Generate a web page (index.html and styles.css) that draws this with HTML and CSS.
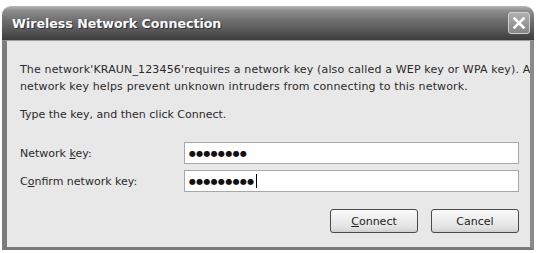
FILE: index.html
```html
<!DOCTYPE html>
<html>
<head>
<meta charset="utf-8">
<link rel="stylesheet" href="styles.css">
</head>
<body>
<div class="window">
  <div class="titlebar">
    <span class="title">Wireless Network Connection</span>
    <span class="close">
      <svg width="14" height="14" viewBox="0 0 14 14"><path d="M2.5 2.5 L11.5 11.5 M11.5 2.5 L2.5 11.5" stroke="#fff" stroke-width="2.6" stroke-linecap="square"/></svg>
    </span>
  </div>
  <div class="body">
    <p class="msg">The network'KRAUN_123456'requires a network key (also called a WEP key or WPA key). A<br>network key helps prevent unknown intruders from connecting to this network.</p>
    <p class="hint">Type the key, and then click Connect.</p>
    <div class="row first">
      <label class="lbl">Network <u>k</u>ey:</label>
      <div class="field">●●●●●●●●</div>
    </div>
    <div class="row">
      <label class="lbl">C<u>o</u>nfirm network key:</label>
      <div class="field">●●●●●●●●●<span class="caret"></span></div>
    </div>
    <div class="buttons">
      <button class="btn"><u>C</u>onnect</button>
      <button class="btn">Cancel</button>
    </div>
  </div>
</div>
</body>
</html>
```
FILE: styles.css
```css
html, body {
  margin: 0;
  padding: 0;
  background: #ffffff;
}
body {
  width: 537px;
  height: 253px;
  overflow: hidden;
  font-family: Tahoma, "DejaVu Sans", "Liberation Sans", sans-serif;
}
.window {
  margin: 6px 0 0 2px;
  width: 532px;
  height: 244px;
  display: flex;
  flex-direction: column;
}
.titlebar {
  height: 34px;
  border-radius: 9px 9px 0 0;
  background: linear-gradient(#b8b8b8 0px, #909090 4px, #707070 14px, #585858 24px, #3c3c3c 34px);
  display: flex;
  align-items: center;
  justify-content: space-between;
  padding: 0 4px 0 10px;
  box-sizing: border-box;
}
.title {
  color: #fafafa;
  font-family: "DejaVu Sans", sans-serif;
  font-weight: bold;
  font-size: 12.6px;
  text-shadow: 1px 1px 0 #333;
}
.close {
  width: 22px;
  height: 22px;
  box-sizing: border-box;
  border: 1px solid #d0d0d0;
  border-radius: 3px;
  background: linear-gradient(#b0b0b0, #858585);
  display: flex;
  align-items: center;
  justify-content: center;
}
.body {
  flex: 1;
  background: #e8e8e8;
  border-left: 5px solid #7c7c7c;
  border-right: 4px solid #8a8a8a;
  border-bottom: 3px solid #7a7a7a;
  border-top: 1px solid #a0a0a0;
  padding: 0 0 0 13px;
  font-size: 11px;
  color: #2a2a2a;
  overflow: hidden;
}
.msg {
  margin: 20px 0 0 0;
  line-height: 17px;
  white-space: nowrap;
  letter-spacing: 0.15px;
}
.hint {
  margin: 11px 0 0 0;
  line-height: 17px;
}
.row {
  display: flex;
  align-items: center;
  margin-top: 6px;
}
.row.first {
  margin-top: 19px;
}
.lbl {
  width: 164px;
}
.field {
  width: 335px;
  height: 22px;
  box-sizing: border-box;
  background: #fff;
  border: 1px solid #a8a8a8;
  font-size: 8px;
  letter-spacing: 0.3px;
  padding-left: 4px;
  display: flex;
  align-items: center;
  color: #111;
}
.caret {
  display: inline-block;
  width: 1px;
  height: 14px;
  background: #000;
  margin-left: 1px;
}
.buttons {
  display: flex;
  justify-content: flex-end;
  gap: 13px;
  margin-top: 17px;
  padding-right: 11px;
}
.btn {
  width: 88px;
  height: 24px;
  font-family: Tahoma, "DejaVu Sans", sans-serif;
  font-size: 11px;
  color: #222;
  background: linear-gradient(#fafafa, #e2e2e2 80%, #cfcfcf);
  border: 1px solid #4a4a4a;
  border-radius: 3px;
  padding: 0;
}
```
